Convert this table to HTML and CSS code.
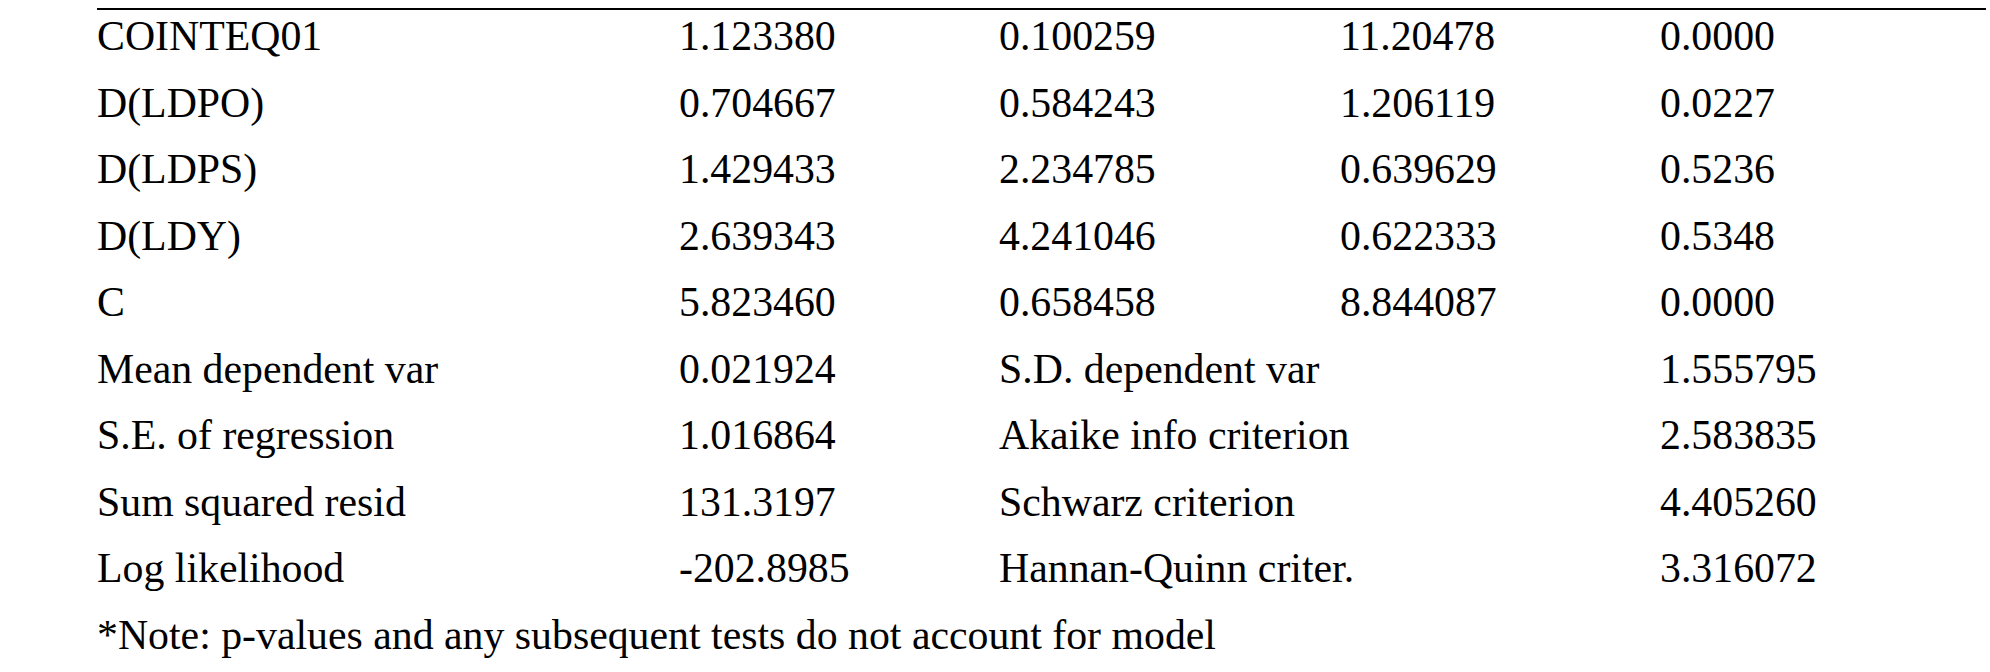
FILE: index.html
```html
<!DOCTYPE html>
<html>
<head>
<meta charset="utf-8">
<link rel="stylesheet" href="styles.css">
</head>
<body>
<div class="table">
  <div class="row"><span>COINTEQ01</span><span>1.123380</span><span>0.100259</span><span>11.20478</span><span>0.0000</span></div>
  <div class="row"><span>D(LDPO)</span><span>0.704667</span><span>0.584243</span><span>1.206119</span><span>0.0227</span></div>
  <div class="row"><span>D(LDPS)</span><span>1.429433</span><span>2.234785</span><span>0.639629</span><span>0.5236</span></div>
  <div class="row"><span>D(LDY)</span><span>2.639343</span><span>4.241046</span><span>0.622333</span><span>0.5348</span></div>
  <div class="row"><span>C</span><span>5.823460</span><span>0.658458</span><span>8.844087</span><span>0.0000</span></div>
  <div class="row"><span>Mean dependent var</span><span>0.021924</span><span class="span2">S.D. dependent var</span><span>1.555795</span></div>
  <div class="row"><span>S.E. of regression</span><span>1.016864</span><span class="span2">Akaike info criterion</span><span>2.583835</span></div>
  <div class="row"><span>Sum squared resid</span><span>131.3197</span><span class="span2">Schwarz criterion</span><span>4.405260</span></div>
  <div class="row"><span>Log likelihood</span><span>-202.8985</span><span class="span2">Hannan-Quinn criter.</span><span>3.316072</span></div>
  <div class="row"><span class="note">*Note: p-values and any subsequent tests do not account for model</span></div>
</div>
</body>
</html>
```

FILE: styles.css
```css
html, body {
  margin: 0;
  padding: 0;
  background: #ffffff;
}

body {
  padding-top: 8px;
  font-family: "Liberation Serif", "Times New Roman", serif;
  font-size: 41.8px;
  color: #000000;
}

.table {
  margin-left: 97px;
  width: 1889px;
  border-top: 2px solid #000000;
}

.row {
  display: grid;
  grid-template-columns: 582px 320px 341px 320px 1fr;
  height: 66.5px;
  line-height: 52px;
  white-space: nowrap;
}

.span2 {
  grid-column: span 2;
}

.note {
  grid-column: 1 / -1;
}
```
